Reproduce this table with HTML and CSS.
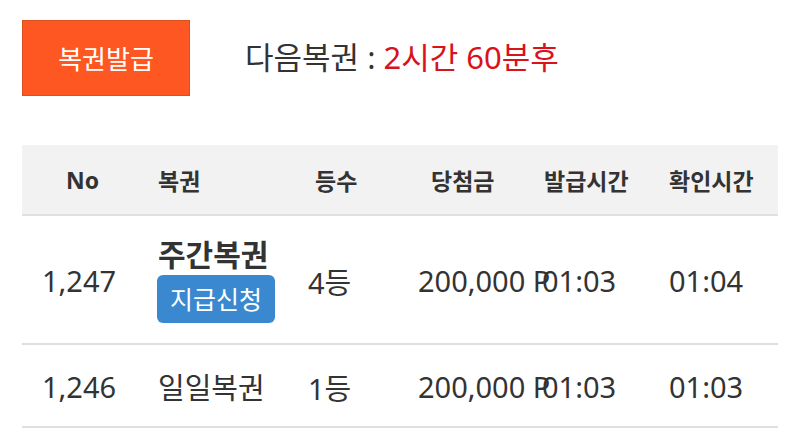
FILE: index.html
```html
<!DOCTYPE html>
<html lang="ko">
<head>
<meta charset="utf-8">
<link rel="stylesheet" href="styles.css">
</head>
<body>
<div class="page">
  <div class="top">
    <button class="issue-btn">복권발급</button>
    <div class="next">다음복권 : <span class="remain">2시간 60분후</span></div>
  </div>
  <div class="table">
    <div class="row head">
      <div class="c c1 h1">No</div>
      <div class="c c2">복권</div>
      <div class="c c3 h3">등수</div>
      <div class="c c4 h4">당첨금</div>
      <div class="c c5 h5">발급시간</div>
      <div class="c c6">확인시간</div>
    </div>
    <div class="row body tall">
      <div class="c c1">1,247</div>
      <div class="c c2 stack">
        <span class="name">주간복권</span>
        <span class="badge">지급신청</span>
      </div>
      <div class="c c3">4등</div>
      <div class="c c4 amt">200,000 P</div>
      <div class="c c5">01:03</div>
      <div class="c c6">01:04</div>
    </div>
    <div class="row body short">
      <div class="c c1">1,246</div>
      <div class="c c2">일일복권</div>
      <div class="c c3">1등</div>
      <div class="c c4 amt">200,000 P</div>
      <div class="c c5">01:03</div>
      <div class="c c6">01:03</div>
    </div>
  </div>
</div>
</body>
</html>
```
FILE: styles.css
```css
html, body { margin: 0; padding: 0; background: #fff; }
body { font-family: "Noto Sans", "Noto Sans CJK KR", sans-serif; color: #333; }
.page { padding: 20px 22px 0 22px; }
.top { display: flex; align-items: center; height: 76px; }
.issue-btn {
  width: 168px; height: 76px; box-sizing: border-box;
  background: #ff5722; border: 1px solid #d9501f; color: #fff;
  font-family: inherit; font-size: 26px; padding: 0;
}
.next { margin-left: 55px; font-size: 31px; color: #333; margin-top: -6px; }
.remain { color: #d8131b; }
.table { margin-top: 49px; }
.row {
  display: grid;
  grid-template-columns: 116px 150px 110px 124px 127px 1fr;
  padding-left: 20px;
  border-bottom: 2px solid #e0e0e0;
  align-items: center;
}
.head { background: #f2f2f2; height: 69px; font-weight: bold; font-size: 23px; }
.body { font-size: 29px; }
.tall { height: 127px; }
.short { height: 81px; }
.c { white-space: nowrap; }
.h1 { padding-left: 24px; }
.h3 { padding-left: 7px; }
.h4 { padding-left: 13px; }
.h5 { padding-left: 2px; }
.amt { position: relative; z-index: 0; padding-top: 2px; }
.c5, .c6 { position: relative; z-index: 1; }
.body .c1, .body .c3, .body .c5, .body .c6 { padding-top: 2px; }
.stack { display: flex; flex-direction: column; align-items: flex-start; }
.name { font-weight: bold; font-size: 30px; line-height: 36px; }
.badge {
  background: #3a88cf; color: #fff; font-size: 25px; line-height: 48px;
  padding: 0 13px; border-radius: 6px; margin-top: 2px; margin-left: -1px;
}
```
